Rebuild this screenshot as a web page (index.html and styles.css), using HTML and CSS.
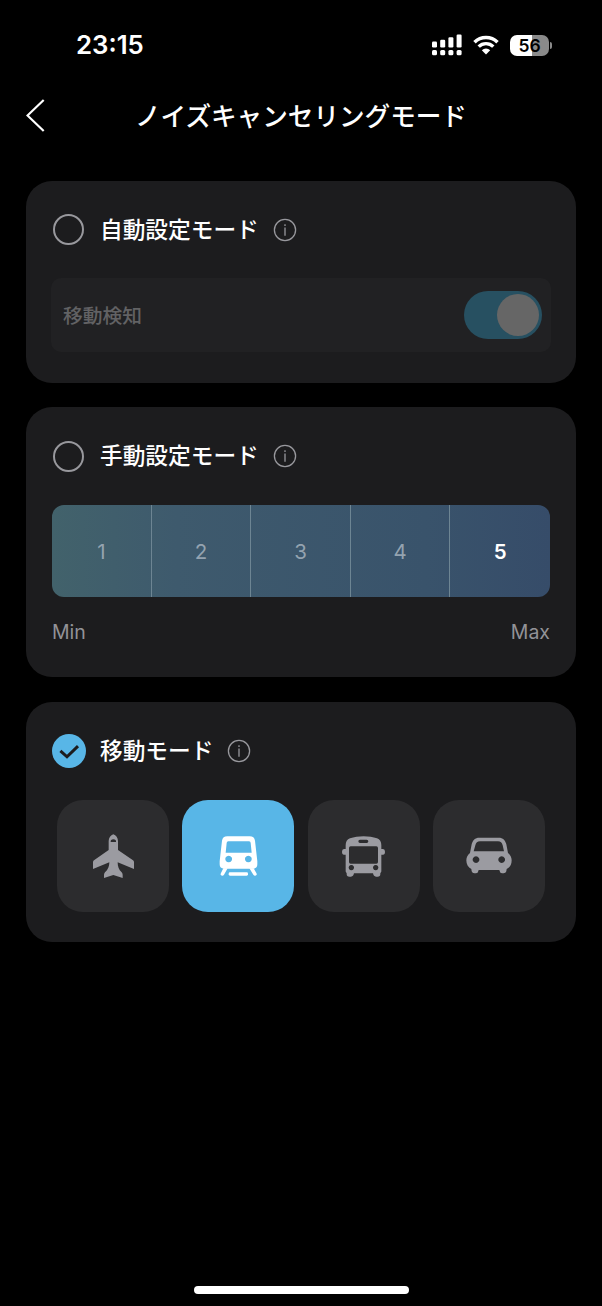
FILE: index.html
```html
<!DOCTYPE html>
<html lang="ja">
<head>
    <meta charset="UTF-8">
    <meta name="viewport" content="width=device-width, initial-scale=1.0">
    <title>ノイズキャンセリングモード</title>
    <link rel="stylesheet" href="styles.css">
</head>
<body>
    <div class="status-bar">
        <div class="time">23:15</div>
        <div class="status-icons">
            <svg class="signal" width="30" height="22" viewBox="0 0 30 22" fill="#fff">
                <rect x="0" y="7.5" width="5" height="6" rx="1.2"/>
                <rect x="8.2" y="5.7" width="5" height="7.8" rx="1.2"/>
                <rect x="16.4" y="3.3" width="5" height="10.2" rx="1.2"/>
                <rect x="24.6" y="0.5" width="5" height="13" rx="1.2"/>
                <rect x="0" y="16" width="5" height="5.3" rx="1.5"/>
                <rect x="8.2" y="16" width="5" height="5.3" rx="1.5"/>
                <rect x="16.4" y="16" width="5" height="5.3" rx="1.5"/>
                <rect x="24.6" y="16" width="5" height="5.3" rx="1.5"/>
            </svg>
            <svg class="wifi" width="26" height="20" viewBox="0 0 26 20">
                <path d="M1.5 7.2a16.4 16.4 0 0 1 23 0" fill="none" stroke="#fff" stroke-width="3.5"/>
                <path d="M5.7 11.6a10.4 10.4 0 0 1 14.6 0" fill="none" stroke="#fff" stroke-width="3.4"/>
                <path d="M13 19.4l-4.2-4.2a6 6 0 0 1 8.4 0z" fill="#fff"/>
            </svg>
            <div class="battery">
                <div class="battery-body">56</div>
                <div class="battery-cap"></div>
            </div>
        </div>
    </div>

    <div class="header">
        <svg class="back" width="20" height="34" viewBox="0 0 20 34">
            <path d="M17.7 1L1.5 16.5l16.2 15.5" fill="none" stroke="#fff" stroke-width="2.2"/>
        </svg>
        <h1>ノイズキャンセリングモード</h1>
    </div>

    <div class="cards">
        <div class="card card-auto">
            <div class="card-title">
                <span class="radio"></span>
                <h2>自動設定モード</h2>
                <svg class="info" width="24" height="24" viewBox="0 0 24 24">
                    <circle cx="12" cy="12" r="10.6"/>
                    <path d="M12 9.6v8.2M12 6.2v1.8"/>
                </svg>
            </div>
            <div class="detect-row">
                <span>移動検知</span>
                <div class="toggle"><div class="knob"></div></div>
            </div>
        </div>

        <div class="card card-manual">
            <div class="card-title">
                <span class="radio"></span>
                <h2>手動設定モード</h2>
                <svg class="info" width="24" height="24" viewBox="0 0 24 24">
                    <circle cx="12" cy="12" r="10.6"/>
                    <path d="M12 9.6v8.2M12 6.2v1.8"/>
                </svg>
            </div>
            <div class="levels">
                <div class="level">1</div>
                <div class="level">2</div>
                <div class="level">3</div>
                <div class="level">4</div>
                <div class="level active">5</div>
            </div>
            <div class="range">
                <span>Min</span>
                <span>Max</span>
            </div>
        </div>

        <div class="card card-move">
            <div class="card-title">
                <svg class="check" width="34" height="34" viewBox="0 0 34 34">
                    <circle cx="17" cy="17" r="17" fill="#58b6e7"/>
                    <path d="M8.4 16.8l6.6 6L26 12.2" fill="none" stroke="#1c1c1e" stroke-width="3"/>
                </svg>
                <h2>移動モード</h2>
                <svg class="info" width="24" height="24" viewBox="0 0 24 24">
                    <circle cx="12" cy="12" r="10.6"/>
                    <path d="M12 9.6v8.2M12 6.2v1.8"/>
                </svg>
            </div>
            <div class="tiles">
                <div class="tile">
                    <!-- airplane -->
                    <svg width="48" height="48" viewBox="117 124 144 144">
                        <path fill-rule="evenodd" d="M190 131c-8 3-14 11-14 20v27l-44 31q-3 2-3 6v20l49-20c0 13-4 22-13 30q-3 3-3 8v9l28-9 28 9v-9q0-5-3-8c-9-8-12-17-12-30l49 20v-20q0-4-3-6l-45-31v-27c0-9-6-17-14-20zM182 154q-1-8 8-8t8 8z"/>
                    </svg>
                </div>
                <div class="tile active">
                    <!-- train -->
                    <svg width="48" height="48" viewBox="118 124 144 144">
                        <path fill-rule="evenodd" d="M158 137h67q14 0 16 13l7 62v9q0 13-13 13H148q-13 0-13-13v-9l7-62q2-13 16-13zM161 152q-5 0-5 5l-3 29h78l-3-29q0-5-5-5zM162 195a10 10 0 1 0 .1 0zM221 195a10 10 0 1 0 .1 0z"/>
                        <path d="M146 233h13l-11 19q-2 3-5 3t-5-3q-1-2 1-5zM224 233h13l8 14q2 3 1 5-2 3-5 3t-5-3z"/>
                        <rect x="162" y="245" width="58" height="10" rx="4"/>
                    </svg>
                </div>
                <div class="tile">
                    <!-- bus -->
                    <svg width="48" height="48" viewBox="120 124 144 144">
                        <path fill-rule="evenodd" d="M137 164q0-16 13-21c24-8 58-8 81 0q13 5 13 21v11h5q6 0 6 8 0 9-6 9h-5v50q0 4-3 5v3q0 8-8 8h-5q-7 0-9-10h-57q-2 10-9 10h-5q-8 0-8-8v-3q-3-1-3-5v-50h-5q-6 0-6-9 0-8 6-8h5zM180 147q-5 0-5 5t5 5h20q5 0 5-5t-5-5zM152 167q-5 0-5 5v42q0 5 5 5h77q5 0 5-5v-42q0-5-5-5zM154 223a8 8 0 1 0 .1 0zM227 223a8 8 0 1 0 .1 0z"/>
                    </svg>
                </div>
                <div class="tile">
                    <!-- car -->
                    <svg width="48" height="48" viewBox="121 124 144 144">
                        <path fill-rule="evenodd" d="M164 141h58c13 0 20 8 23 20l5 26c7 5 11 13 11 22 0 12-5 22-15 26l-1 7q-2 6-8 6h-5q-6 0-7-7l-1-3h-62l-1 3q-1 7-7 7h-5q-6 0-8-6l-1-7c-10-4-15-14-15-26 0-9 4-17 11-22l5-26c3-12 10-20 23-20zM166 152c-8 0-12 4-14 12l-5 18h91l-4-18c-2-8-6-12-14-12zM154 197a10 10 0 1 0 .1 0zM231 197a10 10 0 1 0 .1 0z"/>
                    </svg>
                </div>
            </div>
        </div>
    </div>

    <div class="home-indicator"></div>
</body>
</html>
```
FILE: styles.css
```css
* {
    box-sizing: border-box;
}
body {
    margin: 0;
    height: 1306px;
    display: flex;
    flex-direction: column;
    background-color: #000;
    color: #fff;
    font-family: Inter, 'Noto Sans CJK JP', sans-serif;
}
h1, h2 {
    margin: 0;
    font-weight: 500;
    white-space: nowrap;
}
.status-bar {
    height: 90px;
    padding: 0 50px 0 76px;
    display: flex;
    align-items: center;
    justify-content: space-between;
}
.time {
    font-size: 25.8px;
    font-weight: 600;
    line-height: 30px;
}
.status-icons {
    display: flex;
    align-items: center;
}
.wifi {
    margin: 0 11px;
}
.battery {
    display: flex;
    align-items: center;
    gap: 1px;
}
.battery-body {
    width: 39px;
    height: 21px;
    border-radius: 7px;
    background: linear-gradient(to right, #fff 56%, #8a8a8a 56%);
    color: #000;
    font-size: 17.5px;
    font-weight: 600;
    line-height: 21px;
    text-align: center;
}
.battery-cap {
    width: 2px;
    height: 7px;
    border-radius: 0 2px 2px 0;
    background-color: #8a8a8a;
}
.header {
    height: 52px;
    padding: 0 26px;
    display: grid;
    grid-template-columns: 20px 1fr 20px;
    align-items: center;
}
.header h1 {
    padding-top: 2px;
    font-size: 25.6px;
    line-height: 36px;
    text-align: center;
}
.cards {
    margin: 38.5px 26px 0;
    display: flex;
    flex-direction: column;
    gap: 24.5px;
}
.card {
    padding: 32px 26px 0;
    border-radius: 26px;
    background-color: #1c1c1e;
}
.card-auto {
    height: 202px;
}
.card-manual {
    height: 270px;
}
.card-move {
    height: 240.5px;
}
.card-title {
    height: 34px;
    display: flex;
    align-items: center;
}
.card-title h2 {
    margin-left: 14px;
    font-size: 22.7px;
    line-height: 34px;
}
.radio {
    width: 31px;
    height: 31px;
    margin: 0 2px 0 1px;
    border: 2px solid #98989d;
    border-radius: 50%;
}
.info {
    margin-left: 14px;
    fill: none;
    stroke: #98989d;
    stroke-width: 1.3;
}
.detect-row {
    height: 74px;
    margin: 31.5px -1px 0;
    padding: 0 9px 0 12px;
    display: flex;
    align-items: center;
    justify-content: space-between;
    border-radius: 10px;
    background-color: #212123;
    color: #626264;
    font-size: 19.8px;
    font-weight: 500;
}
.detect-row span {
    padding-bottom: 2px;
}
.toggle {
    width: 78px;
    height: 48px;
    padding: 3px;
    display: flex;
    justify-content: flex-end;
    border-radius: 24px;
    background-color: #275061;
}
.knob {
    width: 42px;
    height: 42px;
    border-radius: 50%;
    background-color: #666;
}
.levels {
    height: 92px;
    margin-top: 32px;
    display: grid;
    grid-template-columns: repeat(5, 1fr);
    overflow: hidden;
    border-radius: 12px;
    background: linear-gradient(to right, #42626b, #3e5a6d 25%, #39536b 75%, #364c69);
}
.level {
    padding-top: 1px;
    display: flex;
    align-items: center;
    justify-content: center;
    color: #94a3b0;
    font-size: 20.5px;
}
.level:not(:last-child) {
    border-right: 1.5px solid #6d8593;
}
.level.active {
    color: #fff;
    font-weight: 600;
}
.range {
    margin-top: 23px;
    display: flex;
    justify-content: space-between;
    color: #929297;
    font-size: 19.5px;
    line-height: 24px;
}
.tiles {
    margin: 32px 4.5px 0;
    display: flex;
    justify-content: space-between;
}
.tile {
    width: 112px;
    height: 112px;
    display: flex;
    align-items: center;
    justify-content: center;
    border-radius: 26px;
    background-color: #2c2c2e;
    fill: #9b9ba1;
}
.tile.active {
    background-color: #58b6e7;
    fill: #fff;
}
.home-indicator {
    width: 215px;
    height: 8px;
    margin: auto auto 12px;
    border-radius: 4px;
    background-color: #fff;
}
```
